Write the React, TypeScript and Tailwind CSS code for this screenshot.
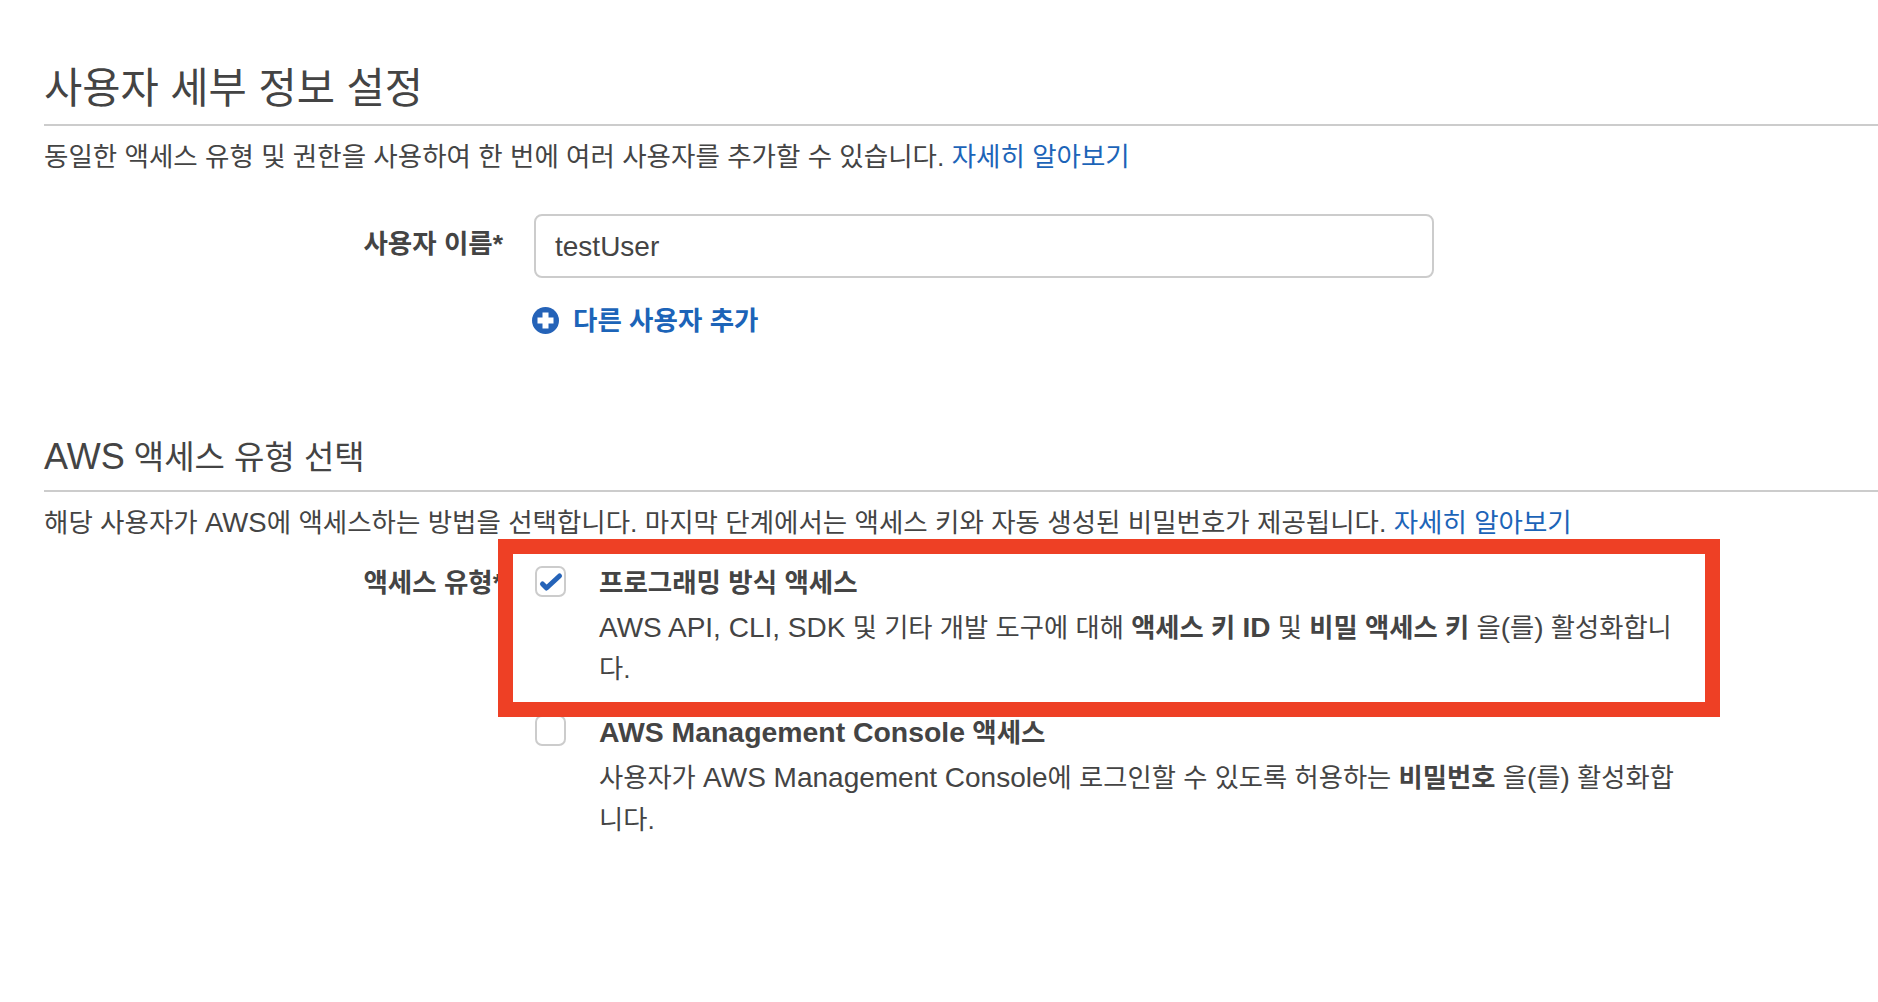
import React from "react";

function L({ children }: { children: React.ReactNode }) {
  return <span className="text-[28px]">{children}</span>;
}

function Check() {
  return (
    <svg viewBox="0 0 31 31" className="w-[31px] h-[31px] shrink-0">
      <path d="M7.5 18 L11.5 22 L24.5 10" fill="none" stroke="#2563b8" strokeWidth="5" strokeLinecap="round" strokeLinejoin="round" />
    </svg>
  );
}

export default function App() {
  return (
    <div className="relative w-[1878px] h-[1002px] overflow-hidden bg-white pl-[44px] pt-[58px] text-[#444444] text-[26.5px] leading-[41px] font-['Liberation_Sans','Noto_Sans_CJK_KR',sans-serif]">
      <h1 className="text-[41.6px] leading-[62px] font-normal h-[66px]">사용자 세부 정보 설정</h1>
      <div className="h-[2px] bg-[#cccccc]" />
      <p className="mt-[11px] h-[41px]">
        동일한 액세스 유형 및 권한을 사용하여 한 번에 여러 사용자를 추가할 수 있습니다.{" "}
        <a className="text-[#1c64b8]">자세히 알아보기</a>
      </p>
      <div className="mt-[36px] flex items-start">
        <label className="w-[459px] text-right font-bold leading-[60px]">사용자 이름*</label>
        <div className="ml-[31px] w-[900px] h-[64px] rounded-[8px] border-2 border-[#cccccc] px-[19px] flex items-center text-[28px]">
          testUser
        </div>
      </div>
      <div className="mt-[20px] ml-[488px] flex items-center h-[44px] font-bold text-[#1c64b8]">
        <svg viewBox="0 0 27 27" className="w-[27px] h-[27px] mr-[14px] shrink-0">
          <circle cx="13.5" cy="13.5" r="13.5" fill="#2563b8" />
          <path d="M13.5 5.5V21.5M5.5 13.5H21.5" stroke="#fff" strokeWidth="6" />
        </svg>
        <span className="translate-y-px">다른 사용자 추가</span>
      </div>
      <h2 className="mt-[91px] text-[33px] leading-[48px] font-normal h-[48px]">
        <span className="text-[36px]">AWS</span> 액세스 유형 선택
      </h2>
      <div className="h-[2px] bg-[#cccccc] mt-[9px]" />
      <p className="mt-[10px] h-[41px]">
        해당 사용자가 <span className="text-[27.5px]">AWS</span>에 액세스하는 방법을 선택합니다. 마지막 단계에서는 액세스 키와 자동 생성된 비밀번호가 제공됩니다.{" "}
        <a className="text-[#1c64b8]">자세히 알아보기</a>
      </p>
      <div className="mt-[20px] flex items-start">
        <label className="w-[459px] text-right font-bold">액세스 유형*</label>
        <div className="ml-[32px] flex flex-col">
          <div className="flex h-[129px]">
            <div className="mt-[3px] w-[31px] h-[31px] rounded-[7px] border-2 border-[#cccccc] bg-white flex items-center justify-center shrink-0">
              <Check />
            </div>
            <div className="ml-[33px] whitespace-nowrap">
              <div className="font-bold mb-[3px]">프로그래밍 방식 액세스</div>
              <div className="text-[26.3px]">
                <L>AWS API, CLI, SDK</L> 및 기타 개발 도구에 대해 <b>액세스 키 <L>ID</L></b> 및 <b>비밀 액세스 키</b> 을<L>(</L>를<L>)</L> 활성화합니
                <br />
                다.
              </div>
            </div>
          </div>
          <div className="flex mt-[21px]">
            <div className="mt-[2px] w-[31px] h-[31px] rounded-[7px] border-2 border-[#cccccc] bg-white shrink-0" />
            <div className="ml-[33px] whitespace-nowrap -mt-px">
              <div className="font-bold mb-[3px]"><span className="text-[28.4px]">AWS Management Console</span> 액세스</div>
              <div className="text-[26.3px] leading-[41.5px]">
                사용자가 <L>AWS Management Console</L>에 로그인할 수 있도록 허용하는 <b>비밀번호</b> 을<L>(</L>를<L>)</L> 활성화합
                <br />
                니다.
              </div>
            </div>
          </div>
        </div>
      </div>
      <div className="absolute left-[498px] top-[539px] w-[1222px] h-[178px] border-[15px] border-[#ee4025]" />
    </div>
  );
}
